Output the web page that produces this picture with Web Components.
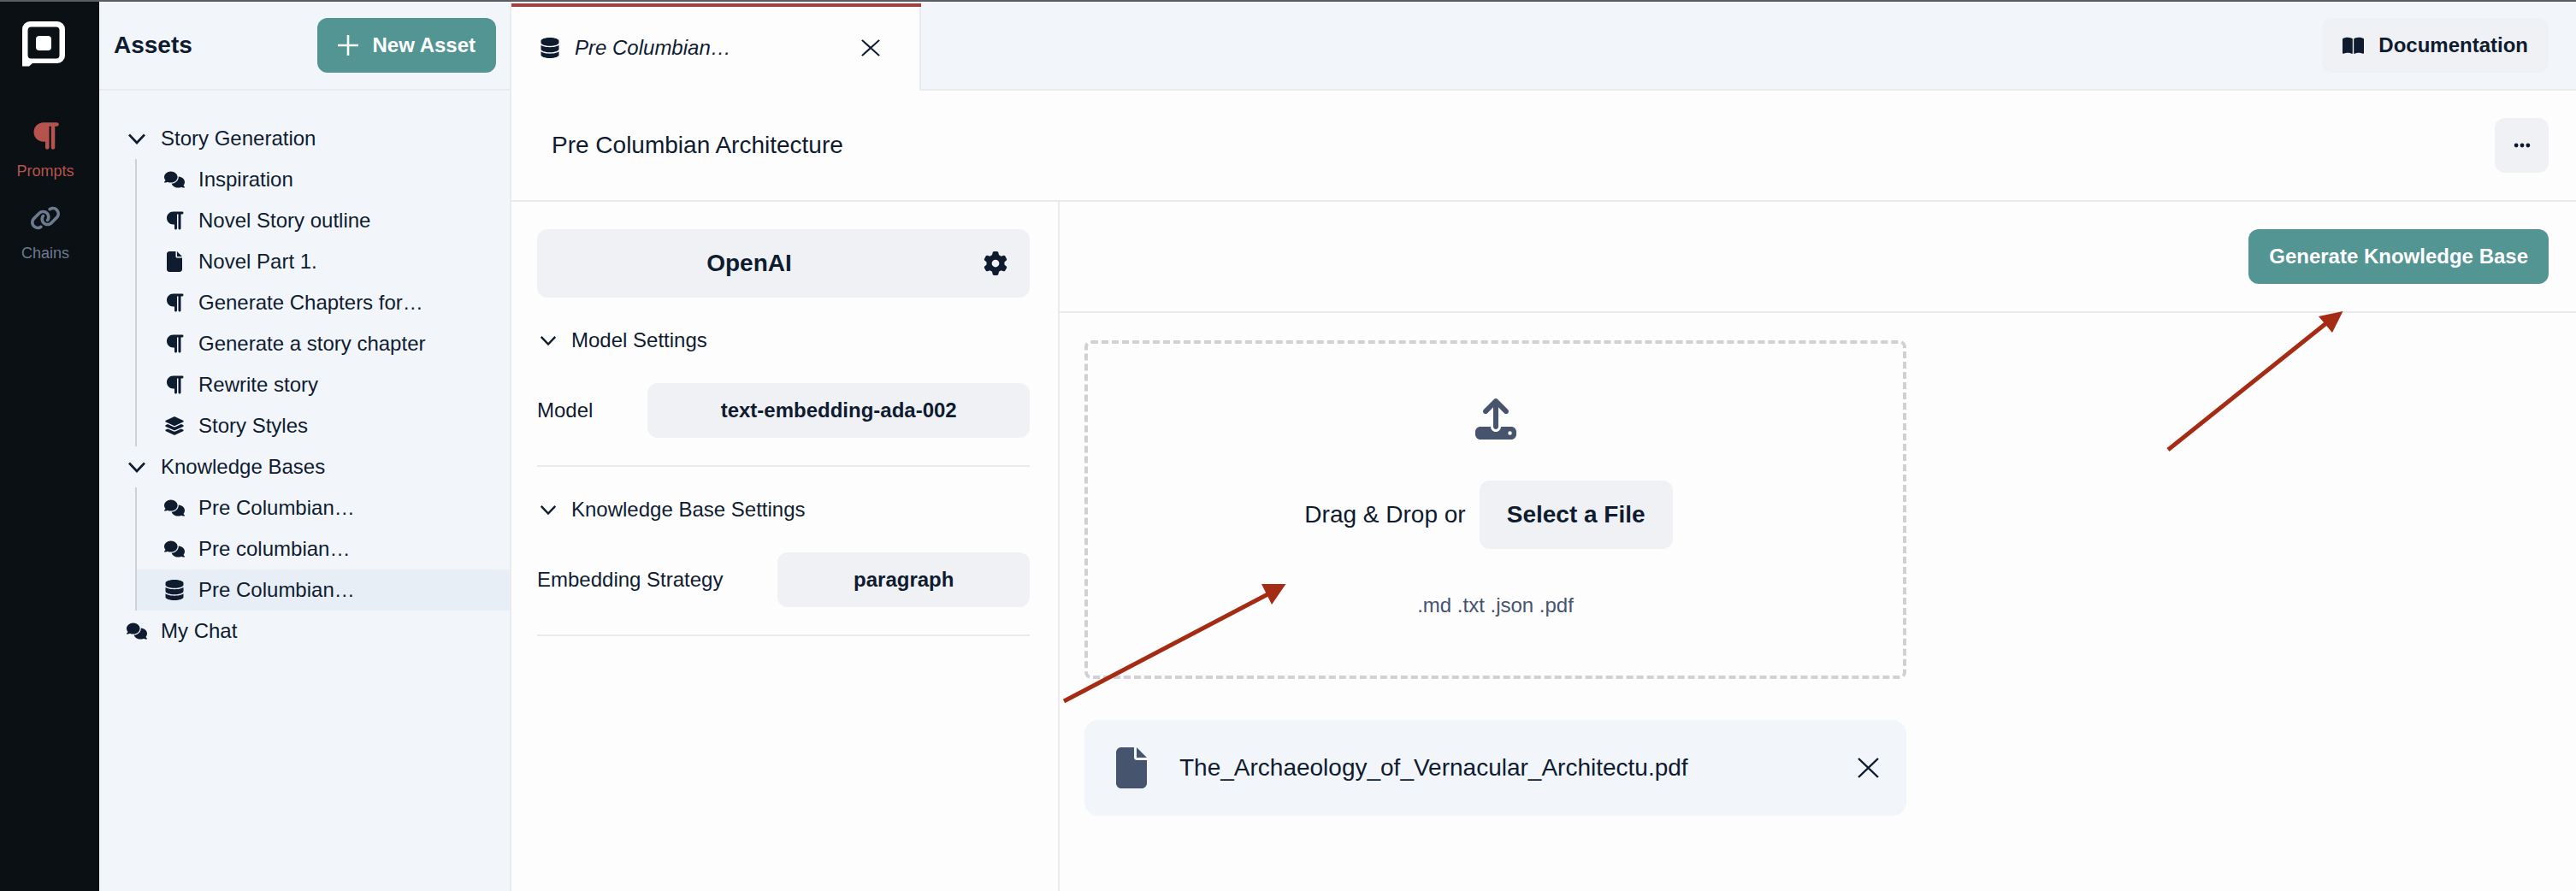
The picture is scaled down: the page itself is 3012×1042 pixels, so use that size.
<!DOCTYPE html>
<html lang="en">
<head>
<meta charset="utf-8">
<title>Assets</title>
<style>
  html, body { margin: 0; height: 100%; }
  body {
    width: 3012px;
    height: 1042px;
    overflow: hidden;
    position: relative;
    font-family: "Liberation Sans", Arial, sans-serif;
    color: #0f1c30;
    background: #fdfdfe;
  }
</style>
</head>
<body>
<app-shell>
  <nav-rail slot="rail">
    <rail-item icon="paragraph" active>Prompts</rail-item>
    <rail-item icon="link">Chains</rail-item>
  </nav-rail>

  <asset-panel slot="panel">
    <tree-group label="Story Generation">
      <tree-row icon="comments">Inspiration</tree-row>
      <tree-row icon="paragraph">Novel Story outline</tree-row>
      <tree-row icon="file">Novel Part 1.</tree-row>
      <tree-row icon="paragraph">Generate Chapters for…</tree-row>
      <tree-row icon="paragraph">Generate a story chapter</tree-row>
      <tree-row icon="paragraph">Rewrite story</tree-row>
      <tree-row icon="layers">Story Styles</tree-row>
    </tree-group>
    <tree-group label="Knowledge Bases">
      <tree-row icon="comments">Pre Columbian…</tree-row>
      <tree-row icon="comments">Pre columbian…</tree-row>
      <tree-row icon="database" selected>Pre Columbian…</tree-row>
    </tree-group>
    <tree-row icon="comments" root>My Chat</tree-row>
  </asset-panel>

  <tab-bar slot="tabs">Pre Columbian…</tab-bar>

  <title-row slot="title">Pre Columbian Architecture</title-row>

  <settings-pane slot="settings">
    <settings-section heading="Model Settings">
      <setting-field label="Model">text-embedding-ada-002</setting-field>
    </settings-section>
    <settings-section heading="Knowledge Base Settings">
      <setting-field label="Embedding Strategy">paragraph</setting-field>
    </settings-section>
  </settings-pane>

  <upload-pane slot="upload">
    <drop-zone></drop-zone>
    <file-row>The_Archaeology_of_Vernacular_Architectu.pdf</file-row>
  </upload-pane>
</app-shell>

<note-arrows></note-arrows>

<script>
const ICONS = {
  paragraph: ['0 0 448 512', 'M192 32h64H416c17.7 0 32 14.3 32 32s-14.3 32-32 32H384l0 352c0 17.7-14.3 32-32 32s-32-14.3-32-32l0-352H288l0 352c0 17.7-14.3 32-32 32s-32-14.3-32-32l0-96H192c-88.4 0-160-71.6-160-160s71.6-160 160-160z'],
  file: ['0 0 384 512', 'M0 64C0 28.7 28.7 0 64 0H224V128c0 17.7 14.3 32 32 32H384V448c0 35.3-28.7 64-64 64H64c-35.3 0-64-28.7-64-64V64zm384 64H256V0L384 128z'],
  comments: ['0 0 640 512', 'M208 352c114.9 0 208-78.8 208-176S322.9 0 208 0S0 78.8 0 176c0 38.6 14.7 74.3 39.6 103.4c-3.5 9.4-8.7 17.7-14.2 24.7c-4.8 6.2-9.7 11-13.3 14.3c-1.8 1.6-3.3 2.9-4.3 3.7c-.5 .4-.9 .7-1.1 .8l-.2 .2 0 0 0 0C1 327.2-1.4 334.4 .8 340.9S9.1 352 16 352c21.8 0 43.8-5.6 62.1-12.5c9.2-3.5 17.8-7.4 25.3-11.4C134.1 343.3 169.8 352 208 352zM448 176c0 112.3-99.1 196.9-216.5 207C255.8 457.4 336.4 512 432 512c38.2 0 73.9-8.7 104.7-23.9c7.5 4 16 7.9 25.2 11.4c18.3 6.9 40.3 12.5 62.1 12.5c6.9 0 13.1-4.5 15.2-11.1c2.1-6.6-.2-13.8-5.8-17.9l0 0 0 0-.2-.2c-.2-.2-.6-.4-1.1-.8c-1-.8-2.5-2-4.3-3.7c-3.6-3.3-8.5-8.1-13.3-14.3c-5.5-7-10.7-15.4-14.2-24.7c24.9-29 39.6-64.7 39.6-103.4c0-92.8-84.9-168.9-192.6-175.5c.4 5.1 .6 10.3 .6 15.5z'],
  layers: ['0 0 576 512', 'M264.5 5.2c14.9-6.9 32.1-6.9 47 0l218.6 101c8.5 3.9 13.9 12.4 13.9 21.8s-5.4 17.9-13.9 21.8l-218.6 101c-14.9 6.9-32.1 6.9-47 0L45.9 149.8C37.4 145.8 32 137.3 32 128s5.4-17.9 13.9-21.8L264.5 5.2zM476.9 209.6l53.2 24.6c8.5 3.9 13.9 12.4 13.9 21.8s-5.4 17.9-13.9 21.8l-218.6 101c-14.9 6.9-32.1 6.9-47 0L45.9 277.8C37.4 273.8 32 265.3 32 256s5.4-17.9 13.9-21.8l53.2-24.6 152 70.2c23.4 10.8 50.4 10.8 73.8 0l152-70.2zm-152 198.2l152-70.2 53.2 24.6c8.5 3.9 13.9 12.4 13.9 21.8s-5.4 17.9-13.9 21.8l-218.6 101c-14.9 6.9-32.1 6.9-47 0L45.9 405.8C37.4 401.8 32 393.3 32 384s5.4-17.9 13.9-21.8l53.2-24.6 152 70.2c23.4 10.8 50.4 10.8 73.8 0z'],
  database: ['0 0 448 512', 'M448 80v48c0 44.2-100.3 80-224 80S0 172.2 0 128V80C0 35.8 100.3 0 224 0S448 35.8 448 80zM393.2 214.7c20.8-7.4 39.9-16.9 54.8-28.6V288c0 44.2-100.3 80-224 80S0 332.2 0 288V186.1c14.9 11.8 34 21.2 54.8 28.6C99.7 230.7 159.5 240 224 240s124.3-9.3 169.2-25.3zM0 346.1c14.9 11.8 34 21.2 54.8 28.6C99.7 390.7 159.5 400 224 400s124.3-9.3 169.2-25.3c20.8-7.4 39.9-16.9 54.8-28.6V432c0 44.2-100.3 80-224 80S0 476.2 0 432V346.1z'],
  gear: ['0 0 512 512', 'M495.9 166.6c3.2 8.7 .5 18.4-6.4 24.6l-43.3 39.4c1.1 8.3 1.7 16.8 1.7 25.4s-.6 17.1-1.7 25.4l43.3 39.4c6.9 6.2 9.6 15.9 6.4 24.6c-4.4 11.9-9.7 23.3-15.8 34.3l-4.7 8.1c-6.6 11-14 21.4-22.1 31.2c-5.9 7.2-15.7 9.6-24.5 6.8l-55.7-17.7c-13.4 10.3-28.2 18.9-44 25.4l-12.5 57.1c-2 9.1-9 16.3-18.2 17.8c-13.8 2.3-28 3.5-42.5 3.5s-28.7-1.2-42.5-3.5c-9.2-1.5-16.2-8.7-18.2-17.8l-12.5-57.1c-15.8-6.5-30.6-15.1-44-25.4L83.1 425.9c-8.8 2.8-18.6 .3-24.5-6.8c-8.1-9.8-15.5-20.2-22.1-31.2l-4.7-8.1c-6.1-11-11.4-22.4-15.8-34.3c-3.2-8.7-.5-18.4 6.4-24.6l43.3-39.4C64.6 273.1 64 264.6 64 256s.6-17.1 1.7-25.4L22.4 191.2c-6.9-6.2-9.6-15.9-6.4-24.6c4.4-11.9 9.7-23.3 15.8-34.3l4.7-8.1c6.6-11 14-21.4 22.1-31.2c5.9-7.2 15.7-9.6 24.5-6.8l55.7 17.7c13.4-10.3 28.2-18.9 44-25.4l12.5-57.1c2-9.1 9-16.3 18.2-17.8C227.3 1.2 241.5 0 256 0s28.7 1.2 42.5 3.5c9.2 1.5 16.2 8.7 18.2 17.8l12.5 57.1c15.8 6.5 30.6 15.1 44 25.4l55.7-17.7c8.8-2.8 18.6-.3 24.5 6.8c8.1 9.8 15.5 20.2 22.1 31.2l4.7 8.1c6.1 11 11.4 22.4 15.8 34.3zM256 336a80 80 0 1 0 0-160 80 80 0 1 0 0 160z'],
  book: ['0 0 576 512', 'M249.6 471.5c10.8 3.8 22.4-4.1 22.4-15.5V78.6c0-4.2-1.6-8.4-5-11C247.4 52 202.4 32 144 32C93.5 32 46.3 45.3 18.1 56.1C6.8 60.5 0 71.7 0 83.8V454.1c0 11.9 12.8 20.2 24.1 16.5C55.6 460.1 105.5 448 144 448c33.9 0 79 14 105.6 23.5zm76.8 0C353 462 398.1 448 432 448c38.5 0 88.4 12.1 119.9 22.6c11.3 3.8 24.1-4.6 24.1-16.5V83.8c0-12.1-6.8-23.3-18.1-27.6C529.7 45.3 482.5 32 432 32c-58.4 0-103.4 20-123 35.6c-3.3 2.6-5 6.8-5 11V456c0 11.4 11.7 19.3 22.4 15.5z'],
  link: ['0 0 640 512', 'M579.8 267.7c56.5-56.5 56.5-148 0-204.5c-50-50-128.8-56.5-186.3-15.4l-1.6 1.1c-14.4 10.3-17.7 30.3-7.4 44.6s30.3 17.7 44.6 7.4l1.6-1.1c32.1-22.9 76-19.3 103.8 8.6c31.5 31.5 31.5 82.5 0 114L422.3 334.8c-31.5 31.5-82.5 31.5-114 0c-27.9-27.9-31.5-71.8-8.6-103.8l1.1-1.6c10.3-14.4 6.9-34.4-7.4-44.6s-34.4-6.9-44.6 7.4l-1.1 1.6C206.5 251.2 213 330 263 380c56.5 56.5 148 56.5 204.5 0L579.8 267.7zM60.2 244.3c-56.5 56.5-56.5 148 0 204.5c50 50 128.8 56.5 186.3 15.4l1.6-1.1c14.4-10.3 17.7-30.3 7.4-44.6s-30.3-17.7-44.6-7.4l-1.6 1.1c-32.1 22.9-76 19.3-103.8-8.6C74 372 74 321 105.5 289.5L217.7 177.2c31.5-31.5 82.5-31.5 114 0c27.9 27.9 31.5 71.8 8.6 103.9l-1.1 1.6c-10.3 14.4-6.9 34.4 7.4 44.6s34.4 6.9 44.6-7.4l1.1-1.6C433.5 260.8 427 182 377 132c-56.5-56.5-148-56.5-204.5 0L60.2 244.3z'],
  upload: ['0 0 512 512', 'M288 109.3V352c0 17.7-14.3 32-32 32s-32-14.3-32-32V109.3l-73.4 73.4c-12.5 12.5-32.8 12.5-45.3 0s-12.5-32.8 0-45.3l128-128c12.5-12.5 32.8-12.5 45.3 0l128 128c12.5 12.5 12.5 32.8 0 45.3s-32.8 12.5-45.3 0L288 109.3zM64 352H192c0 35.3 28.7 64 64 64s64-28.7 64-64H448c35.3 0 64 28.7 64 64v32c0 35.3-28.7 64-64 64H64c-35.3 0-64-28.7-64-64V416c0-35.3 28.7-64 64-64zM432 456a24 24 0 1 0 0-48 24 24 0 1 0 0 48z'],
  ellipsis: ['0 0 448 512', 'M8 256a56 56 0 1 1 112 0A56 56 0 1 1 8 256zm160 0a56 56 0 1 1 112 0 56 56 0 1 1 -112 0zm216-56a56 56 0 1 1 0 112 56 56 0 1 1 0-112z']
};

function icon(name, size) {
  const [box, d] = ICONS[name];
  return `<svg width="${size}" height="${size}" viewBox="${box}" fill="currentColor" style="display:block;flex:none"><path d="${d}"/></svg>`;
}

function chevron() {
  return `<svg width="24" height="24" viewBox="0 0 24 24" fill="none" stroke="currentColor" stroke-width="2.6" style="display:block;flex:none"><path d="M3 7.5l9 9.5 9-9.5"/></svg>`;
}

function cross(w, h) {
  return `<svg width="${w}" height="${h}" viewBox="0 0 24 24" preserveAspectRatio="none" fill="none" stroke="currentColor" stroke-width="2.4" style="display:block;flex:none"><path d="M1 1l22 22M23 1L1 23"/></svg>`;
}

class Base extends HTMLElement {
  constructor() {
    super();
    this.attachShadow({ mode: 'open' });
  }
  connectedCallback() {
    this.shadowRoot.innerHTML = this.getTemplate();
  }
}

class AppShell extends Base {
  getTemplate() {
    return /*html*/`
    <style>
      :host { display: flex; flex-direction: column; width: 3012px; height: 1042px; }
      .strip { height: 2px; background: #5c5d62; flex: none; }
      .body { flex: 1; display: flex; min-height: 0; }
      .main { flex: 1; display: flex; flex-direction: column; min-width: 0; }
      .work { flex: 1; display: flex; min-height: 0; }
    </style>
    <div class="strip"></div>
    <div class="body">
      <slot name="rail"></slot>
      <slot name="panel"></slot>
      <div class="main">
        <slot name="tabs"></slot>
        <slot name="title"></slot>
        <div class="work">
          <slot name="settings"></slot>
          <slot name="upload"></slot>
        </div>
      </div>
    </div>`;
  }
}

class NavRail extends Base {
  getTemplate() {
    return /*html*/`
    <style>
      :host { display: flex; flex-direction: column; align-items: center; width: 116px; flex: none; background: #0a1014; padding: 23px 10px 0 0; box-sizing: border-box; gap: 26px; }
      svg { display: block; margin-bottom: 37px; margin-right: 4px; }
    </style>
    <svg width="50" height="53" viewBox="0 0 50 53">
      <path fill="#fff" d="M9 0h32a9 9 0 0 1 9 9v31a9 9 0 0 1-9 9H12l-4 3.4H0V9a9 9 0 0 1 9-9z"/>
      <rect x="6.500" y="6.500" width="37" height="37" rx="4" fill="#0a1014"/>
      <rect x="16" y="17" width="18" height="17" rx="4" fill="#fff"/>
    </svg>
    <slot></slot>`;
  }
}

class RailItem extends Base {
  getTemplate() {
    const on = this.hasAttribute('active');
    return /*html*/`
    <style>
      :host { display: flex; flex-direction: column; align-items: center; gap: 12px; color: ${on ? '#b5544e' : '#6b7a8f'}; font-size: 18px; line-height: 22px; }
    </style>
    ${icon(this.getAttribute('icon'), 36)}
    <span><slot></slot></span>`;
  }
}

class AssetPanel extends Base {
  getTemplate() {
    return /*html*/`
    <style>
      :host { display: flex; flex-direction: column; width: 482px; flex: none; box-sizing: border-box; background: #f2f5fa; border-right: 2px solid #e9ebef; }
      header { height: 102px; flex: none; box-sizing: content-box; display: flex; align-items: center; justify-content: space-between; padding: 0 16px 0 17px; border-bottom: 2px solid #e9ebef; }
      h1 { margin: 0; font-size: 28px; font-weight: 700; }
      .new { display: flex; align-items: center; gap: 17px; height: 64px; padding: 0 24px; box-sizing: border-box; border-radius: 12px; background: #529593; color: #fff; font-size: 24px; font-weight: 700; }
      .new svg { display: block; }
      .tree { padding-top: 32px; }
    </style>
    <header>
      <h1>Assets</h1>
      <div class="new">
        <svg width="24" height="24" viewBox="0 0 24 24" fill="none" stroke="#fff" stroke-width="2.6"><path d="M12 0v24M0 12h24"/></svg>
        <span>New Asset</span>
      </div>
    </header>
    <div class="tree"><slot></slot></div>`;
  }
}

class TreeGroup extends Base {
  getTemplate() {
    return /*html*/`
    <style>
      :host { display: block; font-size: 24px; }
      .head { display: flex; align-items: center; gap: 16px; height: 48px; padding-left: 32px; }
      .kids { margin-left: 42px; border-left: 2px solid #cfd1d4; }
    </style>
    <div class="head">${chevron()}<span>${this.getAttribute('label')}</span></div>
    <div class="kids"><slot></slot></div>`;
  }
}

class TreeRow extends Base {
  getTemplate() {
    const selected = this.hasAttribute('selected');
    return /*html*/`
    <style>
      :host { display: flex; align-items: center; gap: 16px; height: 48px; padding-left: 32px; font-size: 24px; background: ${selected ? '#e8eef6' : 'transparent'}; }
      span { white-space: nowrap; }
    </style>
    ${icon(this.getAttribute('icon'), 24)}
    <span><slot></slot></span>`;
  }
}

class TabBar extends Base {
  getTemplate() {
    return /*html*/`
    <style>
      :host { display: flex; justify-content: space-between; height: 102px; flex: none; background: #f2f5fa; border-bottom: 2px solid #e9ebef; box-sizing: content-box; }
      .tab { display: flex; align-items: center; width: 477px; height: 102px; margin-bottom: -2px; box-sizing: content-box; padding: 0 0 2px; background: #fdfdfe; border-right: 2px solid #e9ebef; position: relative; }
      .tab::before { content: ""; position: absolute; left: 0; right: -2px; top: 2px; height: 4px; background: #a04340; }
      .inner { display: flex; align-items: center; flex: 1; padding: 6px 46px 0 33px; }
      .name { font-style: italic; font-size: 24px; margin-left: 17px; flex: 1; white-space: nowrap; }
      .right { display: flex; align-items: center; padding-right: 32px; }
      .doc { display: flex; align-items: center; gap: 17px; height: 64px; padding: 0 24px; box-sizing: border-box; border-radius: 12px; background: #eff1f5; font-size: 24px; font-weight: 700; }
    </style>
    <div class="tab">
      <div class="inner">
        ${icon('database', 24)}
        <span class="name"><slot></slot></span>
        ${cross(22, 20)}
      </div>
    </div>
    <div class="right">
      <div class="doc">${icon('book', 25)}<span>Documentation</span></div>
    </div>`;
  }
}

class TitleRow extends Base {
  getTemplate() {
    return /*html*/`
    <style>
      :host { display: flex; align-items: center; justify-content: space-between; height: 128px; flex: none; padding: 0 32px 0 47px; border-bottom: 2px solid #e9ebef; box-sizing: content-box; font-size: 28px; }
      .more { display: flex; align-items: center; justify-content: center; width: 63px; height: 64px; border-radius: 12px; background: #eff1f5; }
    </style>
    <span><slot></slot></span>
    <div class="more">${icon('ellipsis', 22)}</div>`;
  }
}

class SettingsPane extends Base {
  getTemplate() {
    return /*html*/`
    <style>
      :host { display: block; width: 641px; flex: none; box-sizing: border-box; padding: 32px 33px 0 30px; border-right: 2px solid #e9ebef; }
      .provider { display: flex; align-items: center; height: 80px; border-radius: 12px; background: #eff1f5; font-size: 28px; font-weight: 700; }
      .provider span { flex: 1; text-align: center; }
      .gear { width: 80px; display: flex; justify-content: center; }
    </style>
    <div class="provider"><span>OpenAI</span><div class="gear">${icon('gear', 28)}</div></div>
    <slot></slot>`;
  }
}

class SettingsSection extends Base {
  getTemplate() {
    return /*html*/`
    <style>
      :host { display: block; padding-top: 26px; font-size: 24px; }
      .head { display: flex; align-items: center; gap: 16px; height: 48px; margin-bottom: 26px; padding-left: 2px; }
      .head svg { width: 22px; height: 22px; }
      hr { border: 0; height: 2px; background: #e9ebef; margin: 32px 0 0; }
    </style>
    <div class="head">${chevron()}<span>${this.getAttribute('heading')}</span></div>
    <slot></slot>
    <hr>`;
  }
}

class SettingField extends Base {
  getTemplate() {
    return /*html*/`
    <style>
      :host { display: flex; align-items: center; gap: 64px; font-size: 24px; }
      .value { flex: 1; display: flex; align-items: center; justify-content: center; height: 64px; border-radius: 12px; background: #eff1f5; font-weight: 700; }
    </style>
    <span>${this.getAttribute('label')}</span>
    <div class="value"><slot></slot></div>`;
  }
}

class UploadPane extends Base {
  getTemplate() {
    return /*html*/`
    <style>
      :host { display: flex; flex-direction: column; flex: 1; min-width: 0; }
      .bar { display: flex; justify-content: flex-end; align-items: center; height: 128px; flex: none; padding: 0 32px; border-bottom: 2px solid #e9ebef; }
      .go { display: flex; align-items: center; height: 64px; padding: 0 24px; box-sizing: border-box; border-radius: 12px; background: #529593; color: #fff; font-size: 24px; font-weight: 700; }
      .list { padding: 32px 0 0 29px; width: 961px; }
    </style>
    <div class="bar"><div class="go">Generate Knowledge Base</div></div>
    <div class="list"><slot></slot></div>`;
  }
}

class DropZone extends Base {
  getTemplate() {
    return /*html*/`
    <style>
      :host { display: flex; flex-direction: column; align-items: center; height: 396px; box-sizing: border-box; padding-top: 64px; border: 4px dashed #d0d1d4; border-radius: 8px; }
      .up { color: #47546e; }
      .row { display: flex; align-items: center; gap: 16px; margin: 48px 16px 0 0; font-size: 28px; }
      .pick { display: flex; align-items: center; justify-content: center; width: 226px; height: 80px; border-radius: 12px; background: #eff1f5; font-weight: 700; }
      .hint { margin-top: 52px; font-size: 24px; line-height: 28px; color: #47546e; }
    </style>
    <div class="up">${icon('upload', 48)}</div>
    <div class="row"><span>Drag &amp; Drop or</span><div class="pick">Select a File</div></div>
    <div class="hint">.md .txt .json .pdf</div>`;
  }
}

class FileRow extends Base {
  getTemplate() {
    return /*html*/`
    <style>
      :host { display: flex; align-items: center; height: 112px; margin-top: 48px; padding: 0 32px 0 37px; border-radius: 16px; background: #f2f5f9; font-size: 28px; }
      .doc { color: #47546e; }
      span { flex: 1; margin-left: 38px; white-space: nowrap; }
    </style>
    <div class="doc">${icon('file', 48).replace('width="48"', 'width="36"')}</div>
    <span><slot></slot></span>
    ${cross(25, 24)}`;
  }
}

class NoteArrows extends Base {
  getTemplate() {
    return /*html*/`
    <style>
      :host { position: absolute; left: 0; top: 0; width: 3012px; height: 1042px; pointer-events: none; }
      svg { display: block; }
    </style>
    <svg width="3012" height="1042" viewBox="0 0 3012 1042">
      <path d="M1244 820L1488 692" stroke="#a52c14" stroke-width="5" fill="none"/>
      <path d="M1503.500 683L1475 683 1487 707z" fill="#a52c14"/>
      <path d="M2535 526L2720 378" stroke="#a52c14" stroke-width="5" fill="none"/>
      <path d="M2739.500 364L2711 370 2727 389z" fill="#a52c14"/>
    </svg>`;
  }
}

customElements.define('app-shell', AppShell);
customElements.define('nav-rail', NavRail);
customElements.define('rail-item', RailItem);
customElements.define('asset-panel', AssetPanel);
customElements.define('tree-group', TreeGroup);
customElements.define('tree-row', TreeRow);
customElements.define('tab-bar', TabBar);
customElements.define('title-row', TitleRow);
customElements.define('settings-pane', SettingsPane);
customElements.define('settings-section', SettingsSection);
customElements.define('setting-field', SettingField);
customElements.define('upload-pane', UploadPane);
customElements.define('drop-zone', DropZone);
customElements.define('file-row', FileRow);
customElements.define('note-arrows', NoteArrows);
</script>
</body>
</html>
